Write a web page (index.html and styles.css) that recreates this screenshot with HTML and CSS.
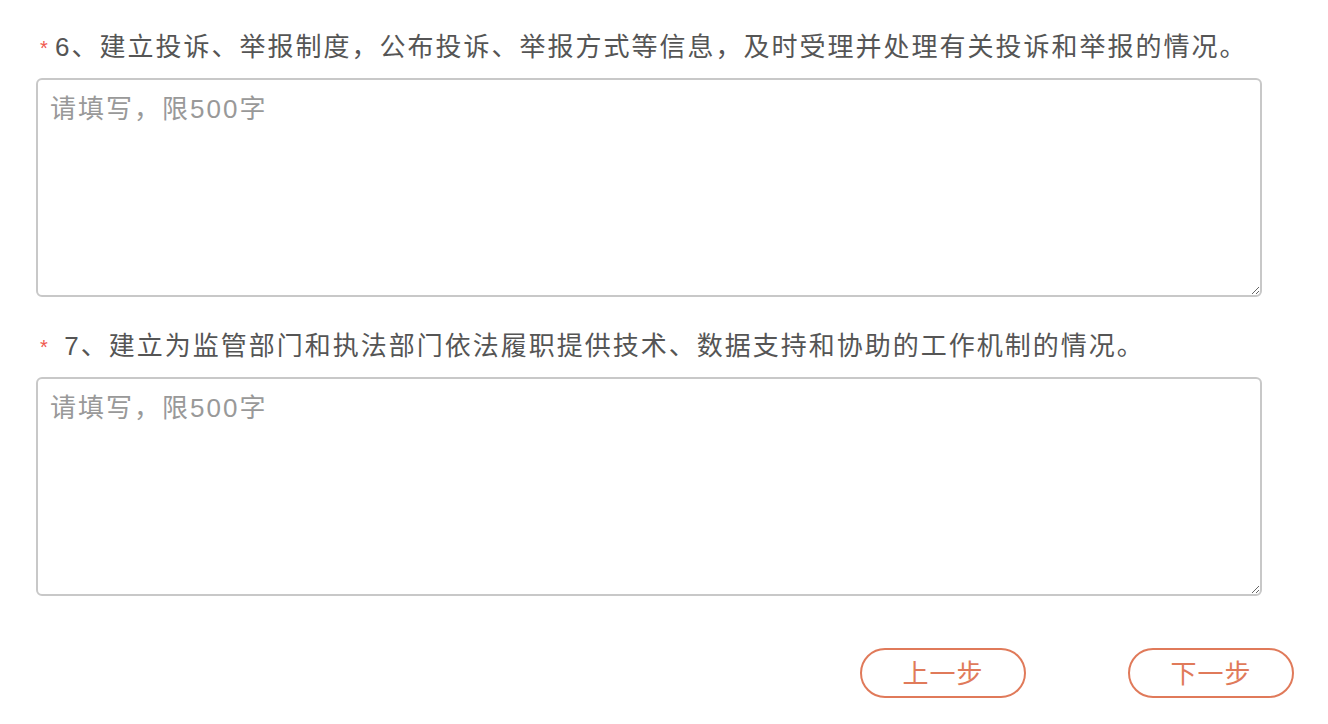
FILE: index.html
```html
<!DOCTYPE html>
<html lang="zh-CN">
<head>
    <meta charset="UTF-8">
    <title>问卷</title>
    <link rel="stylesheet" href="styles.css">
</head>
<body>
    <div class="form">
        <div class="item">
            <div class="label"><span class="star">*</span>6、建立投诉、举报制度，公布投诉、举报方式等信息，及时受理并处理有关投诉和举报的情况。</div>
            <textarea class="answer" placeholder="请填写，限500字"></textarea>
        </div>
        <div class="item">
            <div class="label"><span class="star">*</span> 7、建立为监管部门和执法部门依法履职提供技术、数据支持和协助的工作机制的情况。</div>
            <textarea class="answer" placeholder="请填写，限500字"></textarea>
        </div>
        <div class="btns">
            <button class="btn" type="button">上一步</button>
            <button class="btn" type="button">下一步</button>
        </div>
    </div>
</body>
</html>
```

FILE: styles.css
```css
*{padding: 0;margin: 0;box-sizing: border-box;}
body{
    background: #fff;
    font-family: "Liberation Sans", "Noto Sans CJK SC", sans-serif;
}
.form{
    padding: 31px 34px 0 36px;
}
.item{
    width: 1226px;
    margin-bottom: 33px;
}
.label{
    height: 32px;
    font-size: 26px;
    letter-spacing: 2px;
    line-height: 32px;
    color: #555;
    margin-bottom: 15px;
    white-space: nowrap;
}
.star{
    color: #f0584f;
    font-size: 20px;
    display: inline-block;
    width: 19px;
    letter-spacing: 0;
    padding-left: 4px;
    vertical-align: top;
    line-height: 35px;
}
.answer{
    display: block;
    width: 1226px;
    height: 219px;
    border: 2px solid #c8c8c8;
    border-radius: 6px;
    padding: 8px 12px;
    font-family: "Liberation Sans", "Noto Sans CJK SC", sans-serif;
    font-size: 26px;
    letter-spacing: 2px;
    color: #333;
    resize: vertical;
    outline: none;
}
.answer::placeholder{
    color: #999;
}
.btns{
    display: flex;
    justify-content: flex-end;
    gap: 102px;
    padding-top: 19px;
}
.btn{
    width: 166px;
    height: 50px;
    border: 2px solid #e07a5a;
    border-radius: 25px;
    background: #fff;
    color: #e07a5a;
    font-family: "Liberation Sans", "Noto Sans CJK SC", sans-serif;
    font-size: 26px;
    letter-spacing: 1px;
    padding-bottom: 4px;
}
```
